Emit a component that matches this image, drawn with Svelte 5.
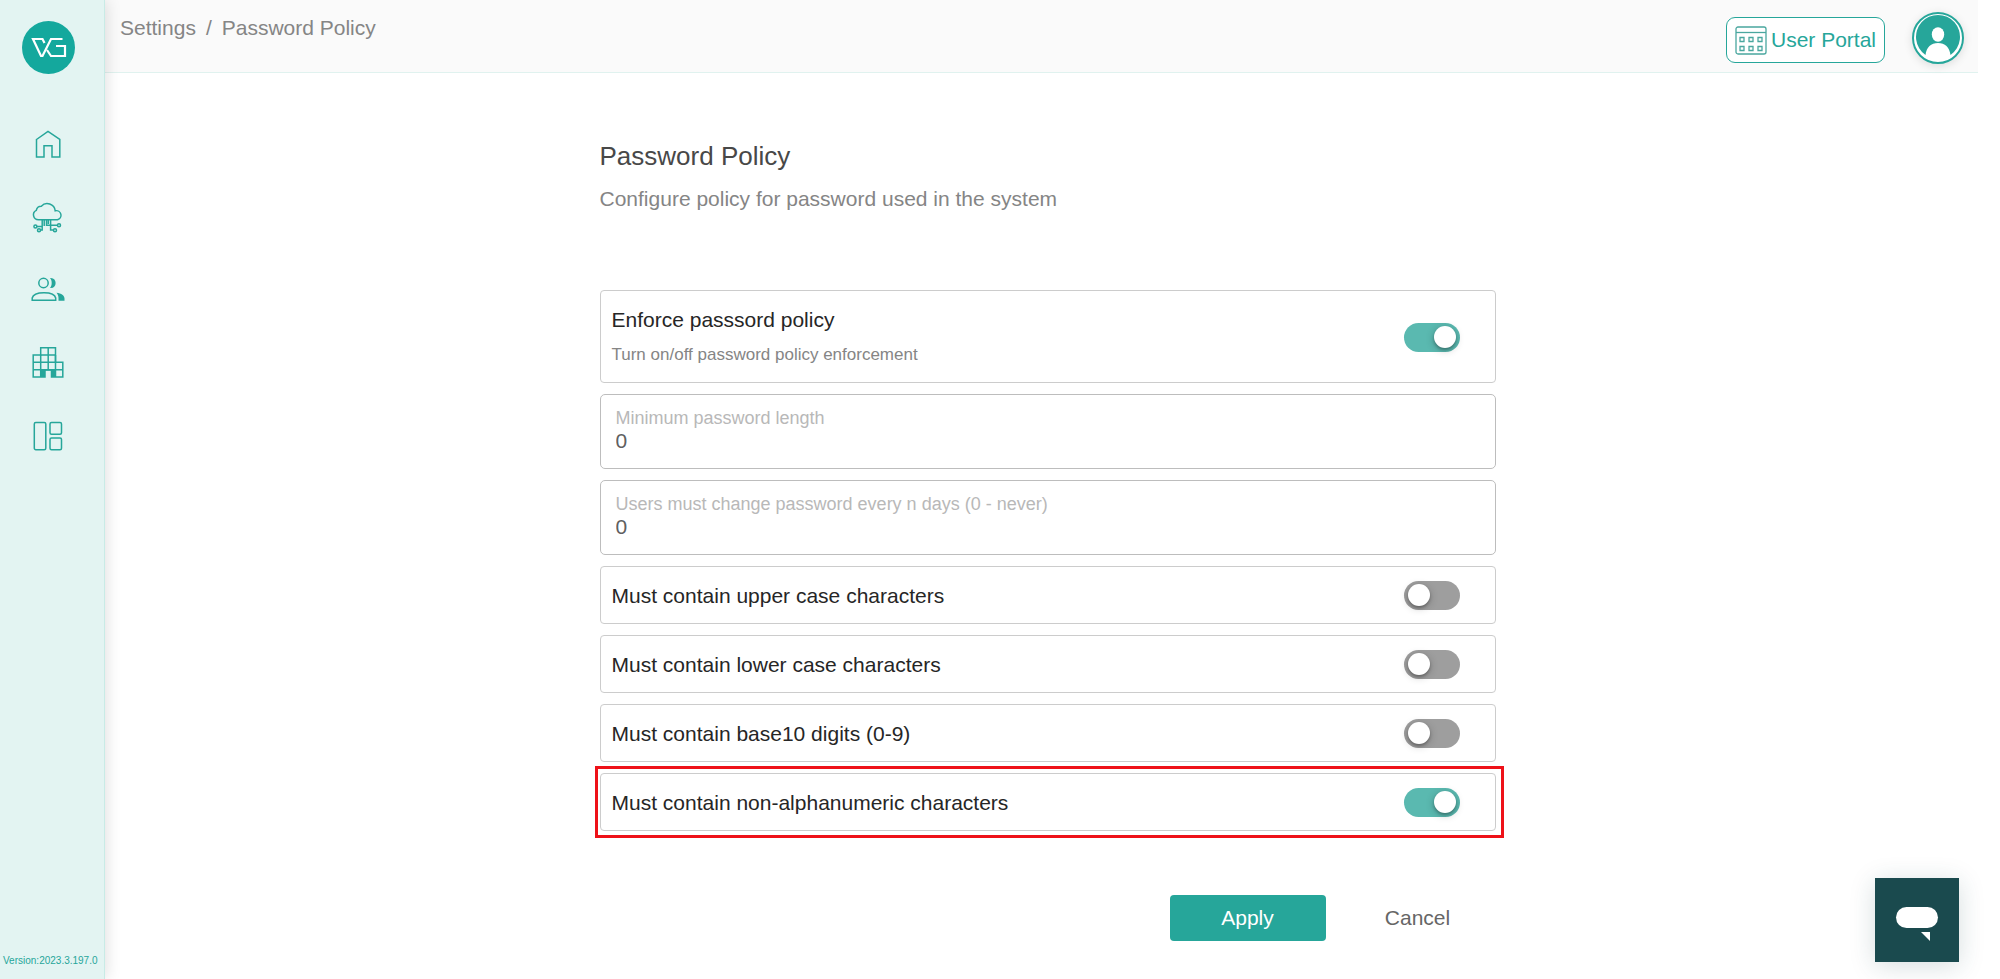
<script lang="ts">
  let enforce = $state(true);
  let minLength = $state('0');
  let changeDays = $state('0');

  let rules = $state([
    { id: 'upper', label: 'Must contain upper case characters', on: false, highlight: false },
    { id: 'lower', label: 'Must contain lower case characters', on: false, highlight: false },
    { id: 'digits', label: 'Must contain base10 digits (0-9)', on: false, highlight: false },
    { id: 'special', label: 'Must contain non-alphanumeric characters', on: true, highlight: true },
  ]);

  function apply(event: SubmitEvent) {
    event.preventDefault();
  }

  function cancel() {
    enforce = true;
    minLength = '0';
    changeDays = '0';
  }
</script>

<div class="page">
  <aside class="sidebar">
    <a class="logo" href="#home" aria-label="VG">
      <svg width="53" height="53" viewBox="0 0 53 53">
        <circle cx="26.5" cy="26.5" r="26.5" fill="#14a89d" />
        <g fill="none" stroke="#fff" stroke-width="2.2">
          <path d="M22.5 22 L20.5 18 H11 L19 35 H20.5 L29 18 H40.5" />
          <path d="M25 29 L29 35 H43 V25 H34" />
        </g>
      </svg>
    </a>

    <nav>
      <a href="#home" aria-label="Home">
        <svg viewBox="0 0 34 34">
          <path d="M5.5 12.5 L17 4.3 L28.8 12.5 V30 H21 V18.7 H13 V30 H5.5 Z" />
        </svg>
      </a>
      <a href="#cloud" aria-label="Cloud">
        <svg viewBox="0 0 34 34">
          <path d="M7.5 19.8 A5 5 0 0 1 5.3 10.3 A5 5 0 0 1 10.3 6.2 A8 8 0 0 1 24.2 10.8 A4.6 4.6 0 0 1 26.5 19.8 Z" />
          <path d="M11.2 20 V26.5 H6 M13.2 20 V26 M15.5 20 V25.3 H26.5 M11.2 26.5 V30 H9.6 M19.6 20 V30 H22.5 M17.3 20 V24" />
          <circle cx="4.4" cy="26.5" r="1.5" />
          <circle cx="8" cy="30.3" r="1.5" />
          <circle cx="24" cy="30.3" r="1.5" />
          <circle cx="28" cy="25.3" r="1.5" />
        </svg>
      </a>
      <a href="#users" aria-label="Users">
        <svg viewBox="0 0 34 34">
          <circle cx="12.5" cy="10" r="4.7" />
          <path d="M1.2 27.2 V25 C2 21.5 6.5 19.7 13 19.7 C19.5 19.7 24 21.5 24.7 25 V27.2 Z" />
          <path class="solid" d="M19 5 C26.5 4 26.5 16 19 15 C21.3 12.5 21.3 7.5 19 5 Z" />
          <path class="solid" d="M25.5 19.8 C30.5 20.6 33.5 22.5 33.5 25.5 V27.8 H27.5 V25 C27.5 22.8 26.5 21 25.5 19.8 Z" />
        </svg>
      </a>
      <a href="#companies" aria-label="Companies">
        <svg viewBox="0 0 34 34">
          <path d="M9.7 1.7 H24.5 V16.3 H31.8 V31 H20.5 V24 H14 V31 H2.2 V9 H9.7 Z" />
          <path d="M17.2 1.7 V24 M9.7 9 V31 M24.5 9 V31 M9.7 9 H24.5 M2.2 16.3 H24.5 M2.2 23.8 H31.8" />
          <path class="solid" d="M9.7 24 H14 V31 H9.7 Z M20.5 24 H24.5 V31 H20.5 Z" />
        </svg>
      </a>
      <a href="#dashboard" aria-label="Dashboard">
        <svg viewBox="0 0 34 34">
          <rect x="3.3" y="3.5" width="11.5" height="27.2" rx="1.5" />
          <rect x="19" y="3.5" width="11.5" height="11.7" rx="1.5" />
          <rect x="19" y="19" width="11.5" height="11.7" rx="1.5" />
        </svg>
      </a>
    </nav>

    <span class="version">Version:2023.3.197.0</span>
  </aside>

  <div class="content">
    <header>
      <div class="breadcrumb">
        <a href="#settings">Settings</a>
        <span>/</span>
        <span>Password Policy</span>
      </div>
      <div class="actions">
        <button type="button" class="portal">
          <svg width="32" height="29" viewBox="0 0 32 29">
            <rect x="1" y="1" width="30" height="27" rx="2" />
            <path d="M1 6.5 H31" />
            <path d="M5 11.5 h4 v4 h-4 Z M14 11.5 h4 v4 h-4 Z M23 11.5 h4 v4 h-4 Z" />
            <path d="M5 20.5 h4 v4 h-4 Z M14 20.5 h4 v4 h-4 Z M23 20.5 h4 v4 h-4 Z" />
          </svg>
          User Portal
        </button>
        <button type="button" class="avatar" aria-label="Account">
          <svg width="52" height="52" viewBox="0 0 52 52">
            <circle cx="26" cy="26" r="25" fill="#fff" stroke="#26a69a" stroke-width="2" />
            <path d="M13.5 43 A22 22 0 1 1 38.5 43 C37.5 35 33 31 26 31 C19 31 14.5 35 13.5 43 Z" fill="#26a69a" />
            <ellipse cx="26" cy="22.5" rx="6.2" ry="7.3" fill="#fff" />
          </svg>
        </button>
      </div>
    </header>

    <main>
      <div class="policy">
        <h1>Password Policy</h1>
        <p class="intro">Configure policy for password used in the system</p>

        <form onsubmit={apply}>
          <div class="card enforce">
            <div>
              <label for="enforce">Enforce passsord policy</label>
              <p>Turn on/off password policy enforcement</p>
            </div>
            <input id="enforce" class="toggle" type="checkbox" bind:checked={enforce} />
          </div>

          <div class="field">
            <label for="min-length">Minimum password length</label>
            <input id="min-length" type="text" inputmode="numeric" bind:value={minLength} />
          </div>

          <div class="field">
            <label for="change-days">Users must change password every n days (0 - never)</label>
            <input id="change-days" type="text" inputmode="numeric" bind:value={changeDays} />
          </div>

          {#each rules as rule (rule.id)}
            <div class="card" class:highlight={rule.highlight}>
              <label for={rule.id}>{rule.label}</label>
              <input id={rule.id} class="toggle" type="checkbox" bind:checked={rule.on} />
            </div>
          {/each}

          <div class="buttons">
            <button type="submit" class="apply">Apply</button>
            <button type="button" class="cancel" onclick={cancel}>Cancel</button>
          </div>
        </form>
      </div>
    </main>
  </div>

  <button type="button" class="chat" aria-label="Open chat">
    <svg width="84" height="84" viewBox="0 0 84 84" fill="#fff">
      <rect x="21" y="29" width="42" height="21" rx="10.5" />
      <path d="M46 54 H55 V63 Z" />
    </svg>
  </button>
</div>

<style>
  :global(body) {
    background: #fff;
  }

  .page {
    display: flex;
    min-height: 100vh;
    box-sizing: border-box;
    padding-right: 22px;
    font-family: 'Liberation Sans', Arial, sans-serif;
    font-size: 21px;
    line-height: 24px;
  }

  a {
    color: inherit;
    text-decoration: none;
  }

  button,
  input {
    font: inherit;
    cursor: pointer;
  }

  h1,
  p {
    margin: 0;
    font-weight: normal;
  }

  .sidebar {
    position: relative;
    z-index: 1;
    display: flex;
    flex-direction: column;
    flex: none;
    width: 105px;
    box-sizing: border-box;
    padding-top: 21px;
    border-right: 1px solid #c8ebe6;
    background: #e3f4f2;
    box-shadow: 2px 0 14px rgba(0, 0, 0, 0.12);
  }

  .logo {
    display: flex;
    padding-left: 22px;
  }

  nav {
    display: flex;
    flex-direction: column;
    align-items: center;
    gap: 39px;
    padding: 53px 8px 0 0;
  }

  nav a {
    display: flex;
  }

  nav svg {
    width: 34px;
    height: 34px;
    fill: none;
    stroke: #26a69a;
    stroke-width: 1.5;
  }

  nav .solid {
    fill: #26a69a;
    stroke: none;
  }

  .version {
    margin-top: auto;
    padding: 0 0 12px 3px;
    color: #26a69a;
    font-size: 10px;
    line-height: 12px;
    white-space: nowrap;
  }

  .content {
    flex: 1;
    min-width: 0;
  }

  header {
    display: flex;
    justify-content: space-between;
    height: 73px;
    box-sizing: border-box;
    padding: 12px 14px 0 15px;
    border-bottom: 1px solid #e0f2ef;
    background: #fafafa;
  }

  .breadcrumb {
    display: flex;
    gap: 10px;
    padding-top: 4px;
    color: #858585;
  }

  .actions {
    display: flex;
    align-items: flex-start;
    gap: 27px;
  }

  .portal {
    display: flex;
    align-items: center;
    gap: 4px;
    height: 46px;
    margin-top: 5px;
    padding: 0 8px;
    border: 1px solid #26a69a;
    border-radius: 9px;
    background: #fff;
    color: #26a69a;
    white-space: nowrap;
  }

  .portal svg {
    fill: none;
    stroke: #4aa79f;
    stroke-width: 1.3;
  }

  .avatar {
    display: flex;
    padding: 0;
    border: 0;
    border-radius: 50%;
    background: none;
    box-shadow: 0 2px 10px rgba(0, 0, 0, 0.12);
  }

  main {
    padding: 68px 0 38px 12px;
  }

  .policy {
    max-width: 896px;
    margin: 0 auto;
  }

  h1 {
    color: #484848;
    font-size: 26px;
    line-height: 30px;
  }

  .intro {
    margin-top: 16px;
    color: #858585;
  }

  form {
    display: flex;
    flex-direction: column;
    gap: 11px;
    margin-top: 79px;
  }

  .card {
    position: relative;
    display: flex;
    align-items: center;
    justify-content: space-between;
    padding: 14px 35px 13px 11px;
    border: 1px solid #ccc;
    border-radius: 4px;
    color: #262626;
  }

  .enforce {
    padding-top: 17px;
    padding-bottom: 16px;
  }

  .card label {
    display: block;
  }

  .card p {
    margin-top: 12px;
    color: #858585;
    font-size: 17px;
    line-height: 22px;
  }

  .highlight::after {
    content: '';
    position: absolute;
    inset: -8px -9px -8px -6px;
    border: 3px solid #ee1118;
    pointer-events: none;
  }

  .toggle {
    flex: none;
    appearance: none;
    width: 56px;
    height: 29px;
    margin: 0;
    padding: 3px 4px;
    box-sizing: border-box;
    border-radius: 15px;
    background: #9e9e9e;
  }

  .toggle::before {
    content: '';
    display: block;
    width: 22px;
    height: 22px;
    border-radius: 50%;
    background: #fff;
    box-shadow:
      0 2px 3px rgba(0, 0, 0, 0.24),
      0 2px 8px rgba(0, 0, 0, 0.24);
  }

  .toggle:checked {
    background: #5ab9b0;
  }

  .toggle:checked::before {
    margin-left: auto;
  }

  .field {
    display: flex;
    flex-direction: column;
    padding: 12px 15px 15px;
    border: 1px solid #bdbdbd;
    border-radius: 5px;
  }

  .field label {
    color: #b8b8b8;
    font-size: 18px;
    line-height: 22px;
  }

  .field input {
    height: 24px;
    padding: 0;
    border: 0;
    outline: none;
    background: none;
    color: #606060;
    cursor: text;
  }

  .buttons {
    display: flex;
    justify-content: flex-end;
    gap: 14px;
    margin-top: 53px;
  }

  .buttons button {
    width: 156px;
    height: 46px;
    padding: 0;
    border: 0;
    border-radius: 4px;
  }

  .apply {
    background: #26a69a;
    color: #fff;
  }

  .cancel {
    background: none;
    color: #666;
  }

  .chat {
    position: fixed;
    right: 41px;
    bottom: 17px;
    display: flex;
    padding: 0;
    border: 0;
    background: #1a4a4e;
    box-shadow: 0 4px 24px rgba(26, 74, 78, 0.18);
  }
</style>
